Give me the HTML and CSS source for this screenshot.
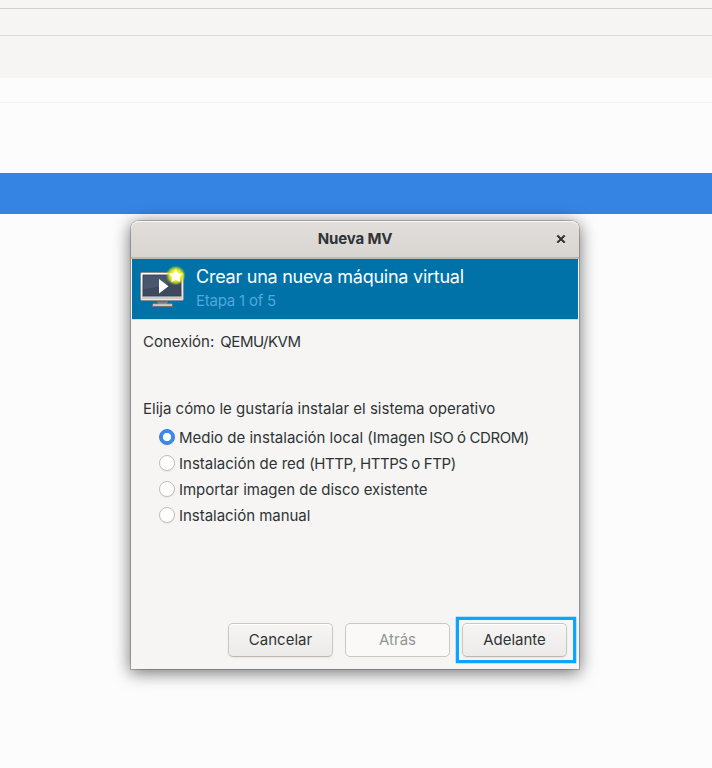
FILE: index.html
```html
<!DOCTYPE html>
<html lang="es">
<head>
<meta charset="utf-8">
<title>Nueva MV</title>
<link rel="stylesheet" href="styles.css">
</head>
<body>
<div class="manager">
  <div class="manager-title"></div>
  <div class="manager-menu"></div>
  <div class="manager-tools"></div>
  <div class="list-head"></div>
  <div class="list-row"></div>
  <div class="list-row-selected"></div>
</div>
<section class="dialog">
  <header class="titlebar">
    <h1 class="title">Nueva MV</h1>
    <button class="close" aria-label="Cerrar">
      <svg width="10" height="11" viewBox="0 0 10 11"><path class="close-glow" d="M1.3 2.5l7.4 7.2M8.7 2.5L1.3 9.7"/><path class="close-mark" d="M1.3 1.5l7.4 7.2M8.7 1.5L1.3 8.7"/></svg>
    </button>
  </header>
  <div class="banner">
    <svg class="vm-icon" width="48" height="48" viewBox="0 0 48 48">
      <defs>
        <linearGradient id="frame" x1="0" y1="0" x2="0" y2="1"><stop offset="0" stop-color="#fafafa"/><stop offset="1" stop-color="#c5c5c3"/></linearGradient>
        <linearGradient id="screen" x1="0" y1="0" x2="0" y2="1"><stop offset="0" stop-color="#3a4966"/><stop offset="1" stop-color="#3e4a5c"/></linearGradient>
        <linearGradient id="shine" x1="0" y1="0" x2="0" y2="1"><stop offset="0" stop-color="#586680"/><stop offset="1" stop-color="#626d7d"/></linearGradient>
        <linearGradient id="stand" x1="0" y1="0" x2="0" y2="1"><stop offset="0" stop-color="#5e5e5e"/><stop offset="1" stop-color="#c8c8c6"/></linearGradient>
        <radialGradient id="glow"><stop offset="0" stop-color="#fffb80"/><stop offset=".55" stop-color="#eef000"/><stop offset=".72" stop-color="#d2e31c" stop-opacity=".8"/><stop offset="1" stop-color="#9ccb4a" stop-opacity="0"/></radialGradient>
      </defs>
      <path d="M18.5 36h10v2.5h4q1 0 1 1v2h-20v-2q0-1 1-1h4z" fill="url(#stand)" stroke="#70706e"/>
      <path d="M14 40h19" stroke="#dededc"/>
      <rect x="1.5" y="7.5" width="43" height="28" rx="1.5" fill="url(#frame)" stroke="#8b8d89"/>
      <rect x="2.5" y="8.5" width="41" height="26" rx=".5" fill="none" stroke="#fff" stroke-opacity=".55"/>
      <rect x="4" y="10" width="38" height="21" fill="url(#screen)" stroke="#343d50" stroke-width=".8"/>
      <path d="M4.5 10.5h37V15C31 16 22 23 4.5 24z" fill="url(#shine)" opacity=".4"/>
      <path d="M20 14v14.5l9.5-7.25z" fill="#fff"/>
      <circle cx="36.8" cy="10.5" r="10" fill="url(#glow)"/>
      <path d="M36.8 4.6l2 3.9 4.3.6-3.1 3 .8 4.3-4-2-4 2 .8-4.3-3.1-3 4.3-.6z" fill="#fff" stroke="#fff" stroke-width=".8" stroke-linejoin="round"/>
    </svg>
    <div class="banner-text">
      <h2 class="heading">Crear una nueva máquina virtual</h2>
      <p class="step">Etapa 1 of 5</p>
    </div>
  </div>
  <main class="content">
    <p class="connection"><span>Conexión:</span><span class="caps">QEMU/KVM</span></p>
    <p class="question">Elija cómo le gustaría instalar el sistema operativo</p>
    <div class="options">
      <label class="option"><input type="radio" name="method" checked><span>Medio de instalación local (Imagen <span class="caps">ISO ó CDROM)</span></span></label>
      <label class="option"><input type="radio" name="method"><span>Instalación de red <span class="caps">(HTTP, HTTPS o FTP)</span></span></label>
      <label class="option"><input type="radio" name="method"><span class="tight">Importar imagen de disco existente</span></label>
      <label class="option"><input type="radio" name="method"><span class="tight">Instalación manual</span></label>
    </div>
  </main>
  <footer class="actions">
    <button class="button">Cancelar</button>
    <button class="button" disabled>Atrás</button>
    <button class="button highlighted">Adelante</button>
  </footer>
</section>
</body>
</html>
```
FILE: styles.css
```css
* { box-sizing: border-box; }
body { margin: 0; height: 768px; overflow: hidden; background: #fcfcfc; color: #2e3436; font: 15px/20px Inter, "Liberation Sans", sans-serif; }
h1, h2, p { margin: 0; font-weight: 400; }
button { padding: 0; font: inherit; color: inherit; }
.manager-title { height: 9px; background: #f6f5f4; border-bottom: 1px solid #d0cfcd; }
.manager-menu { height: 27px; background: #f6f5f4; border-bottom: 1px solid #dbdad8; }
.manager-tools { height: 42px; background: #f6f5f4; }
.list-head { height: 25px; border-bottom: 1px solid #f3f3f3; }
.list-row { height: 70px; }
.list-row-selected { height: 41px; background: #3584e4; }
.dialog { position: absolute; left: 131px; top: 221px; width: 448px; height: 448px; display: flex; flex-direction: column; background: #f6f5f4; border-radius: 8px 8px 0 0; box-shadow: 0 0 0 1px rgba(0,0,0,.2), 0 3px 16px 1px rgba(0,0,0,.5), 0 2px 24px rgba(0,0,0,.06); }
.titlebar { height: 38px; display: grid; grid-template-columns: 38px 1fr 38px; align-items: center; background: linear-gradient(#e1dedb, #d9d5d1); border-bottom: 2px solid #bfb8b1; border-radius: 8px 8px 0 0; box-shadow: inset 0 1px #f8f7f6; }
.title { grid-column: 2; text-align: center; font-size: 15px; font-weight: 700; line-height: 20px; letter-spacing: -.15px; }
.close { height: 20px; padding-left: 2px; border: 0; background: none; display: flex; align-items: center; justify-content: center; }
.close-mark, .close-glow { fill: none; stroke: #2e3436; stroke-width: 2.2; }
.close-glow { stroke: #f7f6f5; }
.banner { height: 61px; margin: 0 1px; padding: 6px 0 0 7px; display: flex; background: #0072a8; border-bottom: 1px solid #d3d8da; }
.vm-icon { flex: none; }
.banner-text { padding: 0 0 0 9px; white-space: nowrap; }
.heading { font-size: 18px; line-height: 24px; letter-spacing: -.25px; color: #fff; }
.step { font-size: 15px; line-height: 24px; letter-spacing: -.22px; color: #50a8dc; }
.content { flex: 1; padding: 12px 12px 0; }
.connection { display: flex; gap: 6px; }
.caps { letter-spacing: -.41px; }
.tight { letter-spacing: -.03px; }
.question { margin-top: 47px; white-space: nowrap; }
.options { margin: 6px 0 0 16px; }
.option { height: 26px; display: flex; align-items: center; gap: 4px; white-space: nowrap; }
.option input { appearance: none; width: 16px; height: 16px; margin: 0 0 2px; border: 1px solid #c4beb8; border-radius: 50%; background: #fff; box-shadow: 0 1px 1px rgba(0,0,0,.06); }
.option input:checked { border: 1px solid #2f7fe0; background: radial-gradient(circle, #fff 3.7px, #3d8ae8 4.5px); }
.actions { display: flex; justify-content: flex-end; gap: 12px; padding: 0 12px 12px; }
.button { width: 105px; height: 34px; border: 1px solid #cdc7c2; border-bottom-color: #bfb8b1; border-radius: 5px; background: linear-gradient(#f6f5f4, #edebe9); box-shadow: inset 0 1px #fff, 0 1px 2px rgba(0,0,0,.07); }
.button:disabled { background: #faf9f8; border-color: #cdc7c2; color: #929595; box-shadow: none; }
.highlighted { position: relative; }
.highlighted::after { content: ""; position: absolute; inset: -7px -10px -7px -7px; border: 3px solid #0aa5ff; box-shadow: 0 0 0 .5px rgba(10,165,255,.5); }
```
